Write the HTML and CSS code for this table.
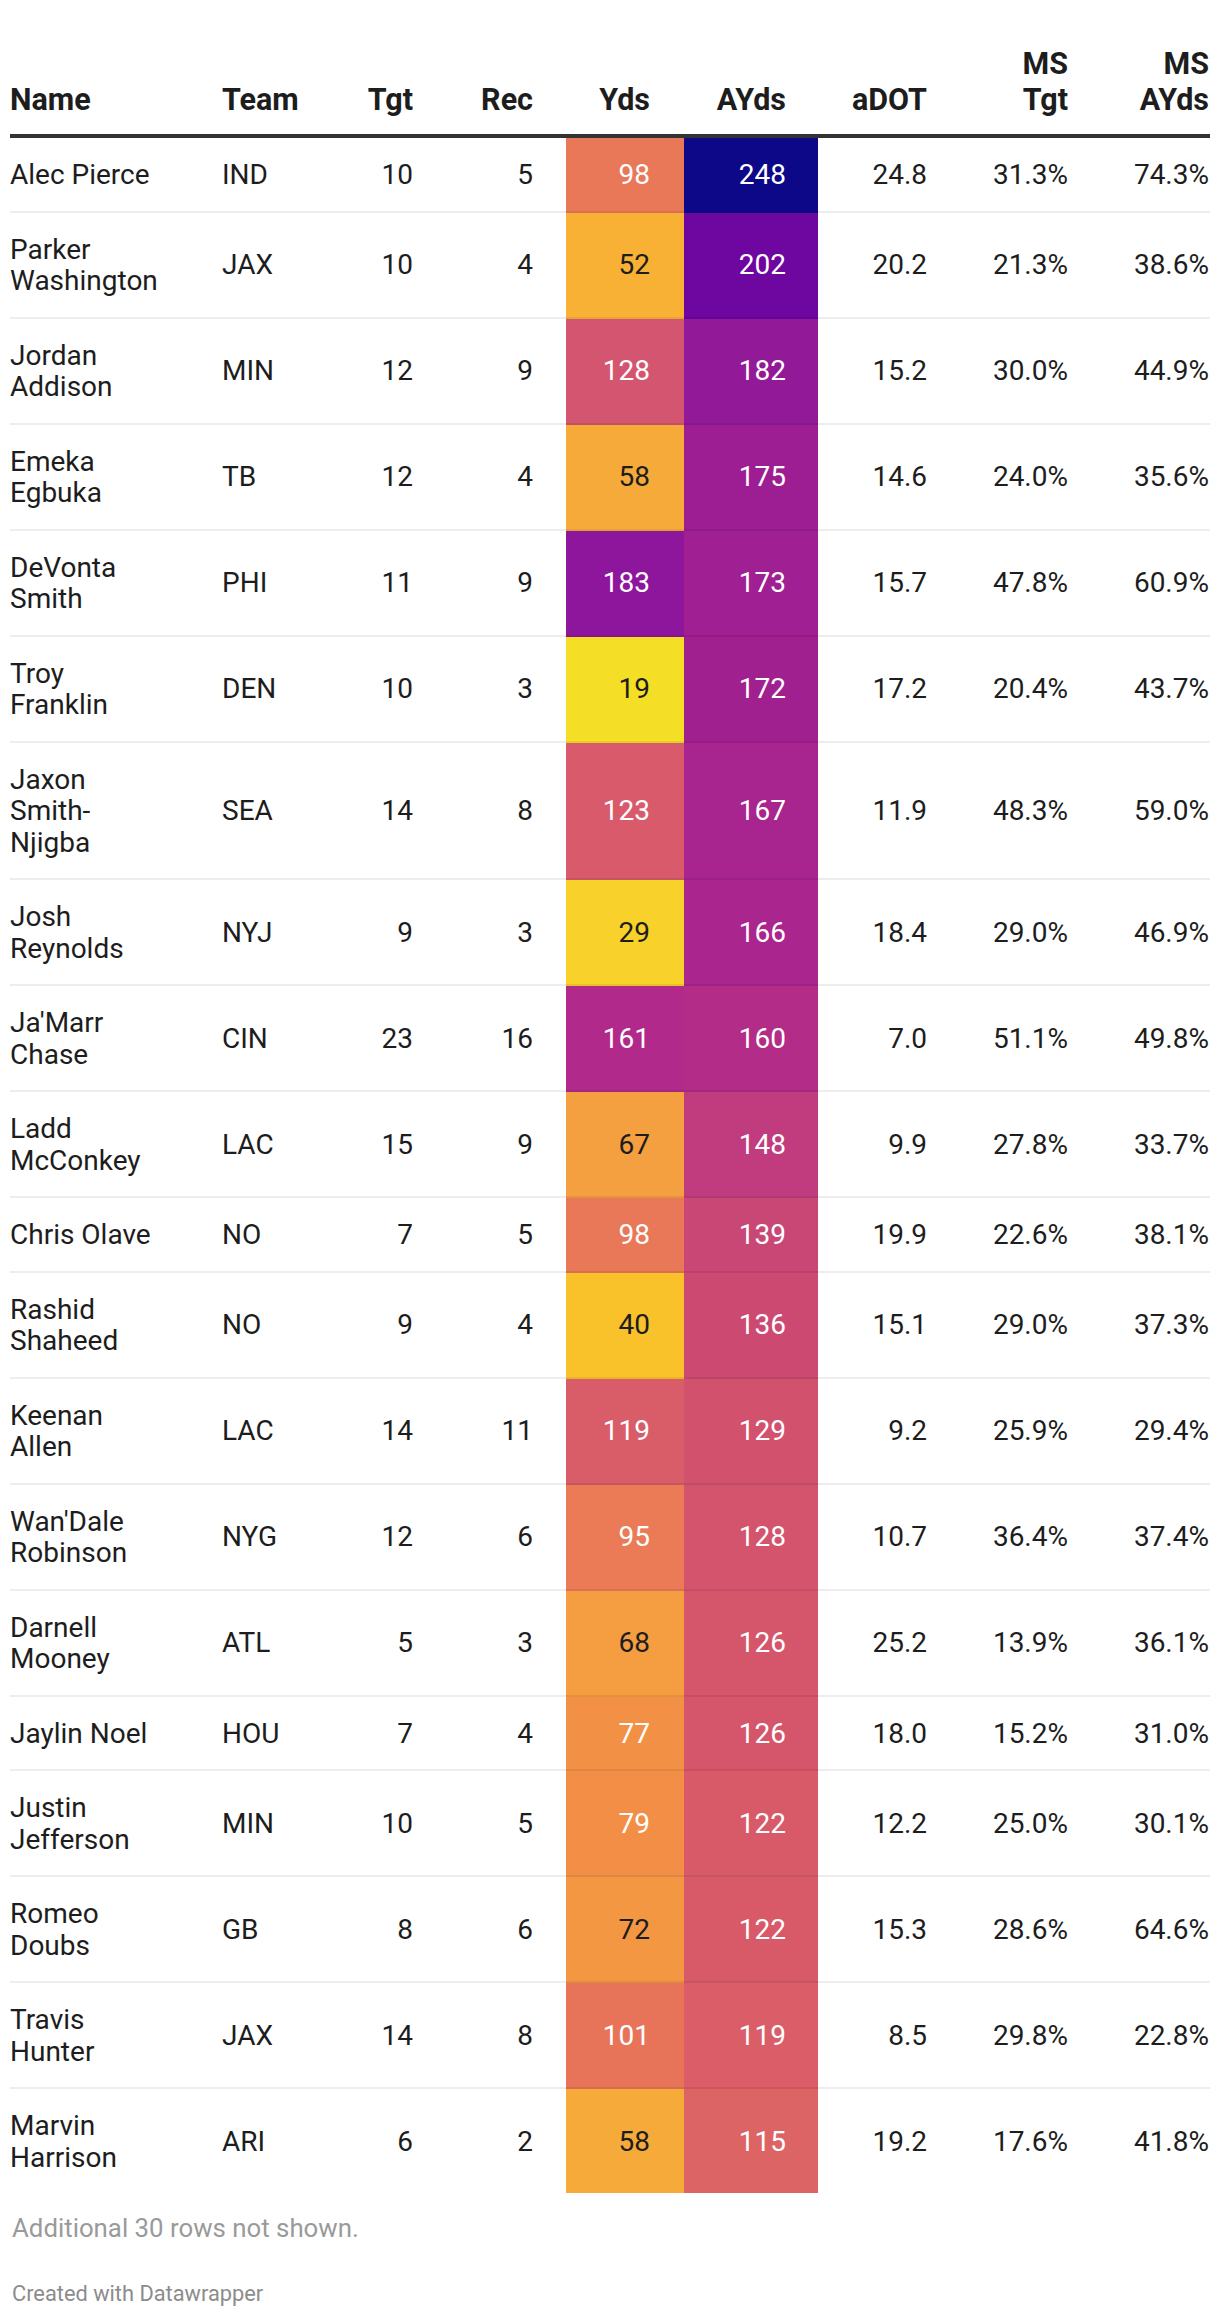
FILE: index.html
```html
<!DOCTYPE html>
<html lang="en">
<head>
<meta charset="utf-8">
<title>Receivers table</title>
<link rel="stylesheet" href="styles.css">
</head>
<body>
<div class="chart">
  <table class="dw-table">
    <colgroup>
      <col class="c-name"><col class="c-team"><col class="c-tgt"><col class="c-rec"><col class="c-yds"><col class="c-ayds"><col class="c-adot"><col class="c-mstgt"><col class="c-msayds">
    </colgroup>
    <thead>
      <tr>
        <th class="name">Name</th>
        <th class="team">Team</th>
        <th class="tgt">Tgt</th>
        <th class="rec">Rec</th>
        <th class="yds">Yds</th>
        <th class="ayds">AYds</th>
        <th class="adot">aDOT</th>
        <th class="mstgt">MS<br>Tgt</th>
        <th class="msayds">MS<br>AYds</th>
      </tr>
    </thead>
    <tbody>
      <tr><td class="name">Alec Pierce</td><td class="team">IND</td><td class="tgt">10</td><td class="rec">5</td><td class="yds light" style="background:#e97858">98</td><td class="ayds light" style="background:#0d0887">248</td><td class="adot">24.8</td><td class="mstgt">31.3%</td><td class="msayds">74.3%</td></tr>
      <tr><td class="name">Parker Washington</td><td class="team">JAX</td><td class="tgt">10</td><td class="rec">4</td><td class="yds" style="background:#f8b135">52</td><td class="ayds light" style="background:#6e06a0">202</td><td class="adot">20.2</td><td class="mstgt">21.3%</td><td class="msayds">38.6%</td></tr>
      <tr><td class="name">Jordan Addison</td><td class="team">MIN</td><td class="tgt">12</td><td class="rec">9</td><td class="yds light" style="background:#d45570">128</td><td class="ayds light" style="background:#921997">182</td><td class="adot">15.2</td><td class="mstgt">30.0%</td><td class="msayds">44.9%</td></tr>
      <tr><td class="name">Emeka Egbuka</td><td class="team">TB</td><td class="tgt">12</td><td class="rec">4</td><td class="yds" style="background:#f6aa3a">58</td><td class="ayds light" style="background:#9d1e93">175</td><td class="adot">14.6</td><td class="mstgt">24.0%</td><td class="msayds">35.6%</td></tr>
      <tr><td class="name">DeVonta Smith</td><td class="team">PHI</td><td class="tgt">11</td><td class="rec">9</td><td class="yds light" style="background:#8e169d">183</td><td class="ayds light" style="background:#a01f92">173</td><td class="adot">15.7</td><td class="mstgt">47.8%</td><td class="msayds">60.9%</td></tr>
      <tr><td class="name">Troy Franklin</td><td class="team">DEN</td><td class="tgt">10</td><td class="rec">3</td><td class="yds" style="background:#f5df26">19</td><td class="ayds light" style="background:#a12090">172</td><td class="adot">17.2</td><td class="mstgt">20.4%</td><td class="msayds">43.7%</td></tr>
      <tr><td class="name">Jaxon Smith-Njigba</td><td class="team">SEA</td><td class="tgt">14</td><td class="rec">8</td><td class="yds light" style="background:#d85a6b">123</td><td class="ayds light" style="background:#a8248e">167</td><td class="adot">11.9</td><td class="mstgt">48.3%</td><td class="msayds">59.0%</td></tr>
      <tr><td class="name">Josh Reynolds</td><td class="team">NYJ</td><td class="tgt">9</td><td class="rec">3</td><td class="yds" style="background:#f8d12a">29</td><td class="ayds light" style="background:#aa258d">166</td><td class="adot">18.4</td><td class="mstgt">29.0%</td><td class="msayds">46.9%</td></tr>
      <tr><td class="name">Ja'Marr Chase</td><td class="team">CIN</td><td class="tgt">23</td><td class="rec">16</td><td class="yds light" style="background:#b12a8b">161</td><td class="ayds light" style="background:#b22c88">160</td><td class="adot">7.0</td><td class="mstgt">51.1%</td><td class="msayds">49.8%</td></tr>
      <tr><td class="name">Ladd McConkey</td><td class="team">LAC</td><td class="tgt">15</td><td class="rec">9</td><td class="yds" style="background:#f49f40">67</td><td class="ayds light" style="background:#c03c7e">148</td><td class="adot">9.9</td><td class="mstgt">27.8%</td><td class="msayds">33.7%</td></tr>
      <tr><td class="name">Chris Olave</td><td class="team">NO</td><td class="tgt">7</td><td class="rec">5</td><td class="yds light" style="background:#e97858">98</td><td class="ayds light" style="background:#c94774">139</td><td class="adot">19.9</td><td class="mstgt">22.6%</td><td class="msayds">38.1%</td></tr>
      <tr><td class="name">Rashid Shaheed</td><td class="team">NO</td><td class="tgt">9</td><td class="rec">4</td><td class="yds" style="background:#f9c22a">40</td><td class="ayds light" style="background:#cc4a72">136</td><td class="adot">15.1</td><td class="mstgt">29.0%</td><td class="msayds">37.3%</td></tr>
      <tr><td class="name">Keenan Allen</td><td class="team">LAC</td><td class="tgt">14</td><td class="rec">11</td><td class="yds light" style="background:#d95c69">119</td><td class="ayds light" style="background:#d2526d">129</td><td class="adot">9.2</td><td class="mstgt">25.9%</td><td class="msayds">29.4%</td></tr>
      <tr><td class="name">Wan'Dale Robinson</td><td class="team">NYG</td><td class="tgt">12</td><td class="rec">6</td><td class="yds light" style="background:#eb7b56">95</td><td class="ayds light" style="background:#d3546c">128</td><td class="adot">10.7</td><td class="mstgt">36.4%</td><td class="msayds">37.4%</td></tr>
      <tr><td class="name">Darnell Mooney</td><td class="team">ATL</td><td class="tgt">5</td><td class="rec">3</td><td class="yds" style="background:#f49d41">68</td><td class="ayds light" style="background:#d5566b">126</td><td class="adot">25.2</td><td class="mstgt">13.9%</td><td class="msayds">36.1%</td></tr>
      <tr><td class="name">Jaylin Noel</td><td class="team">HOU</td><td class="tgt">7</td><td class="rec">4</td><td class="yds light" style="background:#f29145">77</td><td class="ayds light" style="background:#d5566b">126</td><td class="adot">18.0</td><td class="mstgt">15.2%</td><td class="msayds">31.0%</td></tr>
      <tr><td class="name">Justin Jefferson</td><td class="team">MIN</td><td class="tgt">10</td><td class="rec">5</td><td class="yds light" style="background:#f28e46">79</td><td class="ayds light" style="background:#d85a69">122</td><td class="adot">12.2</td><td class="mstgt">25.0%</td><td class="msayds">30.1%</td></tr>
      <tr><td class="name">Romeo Doubs</td><td class="team">GB</td><td class="tgt">8</td><td class="rec">6</td><td class="yds" style="background:#f39743">72</td><td class="ayds light" style="background:#d85a69">122</td><td class="adot">15.3</td><td class="mstgt">28.6%</td><td class="msayds">64.6%</td></tr>
      <tr><td class="name">Travis Hunter</td><td class="team">JAX</td><td class="tgt">14</td><td class="rec">8</td><td class="yds light" style="background:#e77459">101</td><td class="ayds light" style="background:#da5d67">119</td><td class="adot">8.5</td><td class="mstgt">29.8%</td><td class="msayds">22.8%</td></tr>
      <tr class="last"><td class="name">Marvin Harrison</td><td class="team">ARI</td><td class="tgt">6</td><td class="rec">2</td><td class="yds" style="background:#f6aa3a">58</td><td class="ayds light" style="background:#dd6464">115</td><td class="adot">19.2</td><td class="mstgt">17.6%</td><td class="msayds">41.8%</td></tr>
    </tbody>
  </table>
  <p class="notes">Additional 30 rows not shown.</p>
  <p class="credit">Created with Datawrapper</p>
</div>
</body>
</html>
```
FILE: styles.css
```css
html, body {
  margin: 0;
  padding: 0;
  background: #ffffff;
}

body {
  font-family: Roboto, "Noto Sans", "Liberation Sans", sans-serif;
  color: #1d1d1d;
}

.chart {
  padding: 46px 10px 0 10px;
}

.dw-table {
  border-collapse: separate;
  border-spacing: 0;
  table-layout: fixed;
  width: 1200px;
}

.c-name { width: 195px; }
.c-team { width: 95px; }
.c-tgt { width: 130px; }
.c-rec { width: 136px; }
.c-yds { width: 118px; }
.c-ayds { width: 134px; }
.c-adot { width: 126px; }
.c-mstgt { width: 141px; }
.c-msayds { width: 125px; }

.dw-table th,
.dw-table td {
  padding-left: 17px;
  padding-right: 17px;
  text-align: right;
}

.dw-table th {
  font-size: 30.5px;
  font-weight: 700;
  line-height: 36px;
  padding-top: 0;
  padding-bottom: 16px;
  vertical-align: bottom;
  border-bottom: 4px solid #333333;
  color: #1d1d1d;
}

.dw-table td {
  font-size: 28px;
  font-weight: 400;
  line-height: 31.5px;
  padding-top: 21px;
  padding-bottom: 20px;
  vertical-align: middle;
  border-bottom: 2px solid rgba(0, 0, 0, 0.07);
}

.dw-table tr.last td {
  border-bottom: 0;
}

.dw-table .name {
  text-align: left;
  padding-left: 0;
  padding-right: 51px;
}

.dw-table .team {
  text-align: left;
}

.dw-table .rec {
  padding-right: 33px;
}

.dw-table .yds {
  padding-right: 34px;
}

.dw-table .ayds {
  padding-right: 32px;
}

.dw-table .msayds {
  padding-right: 1px;
}

.dw-table td.light {
  color: #ffffff;
}

.notes {
  margin: 19px 0 0 2px;
  font-size: 25.8px;
  line-height: 32px;
  color: #9a9a9a;
}

.credit {
  margin: 36px 0 0 2px;
  font-size: 21.8px;
  line-height: 28px;
  color: #8c8c8c;
}
```
